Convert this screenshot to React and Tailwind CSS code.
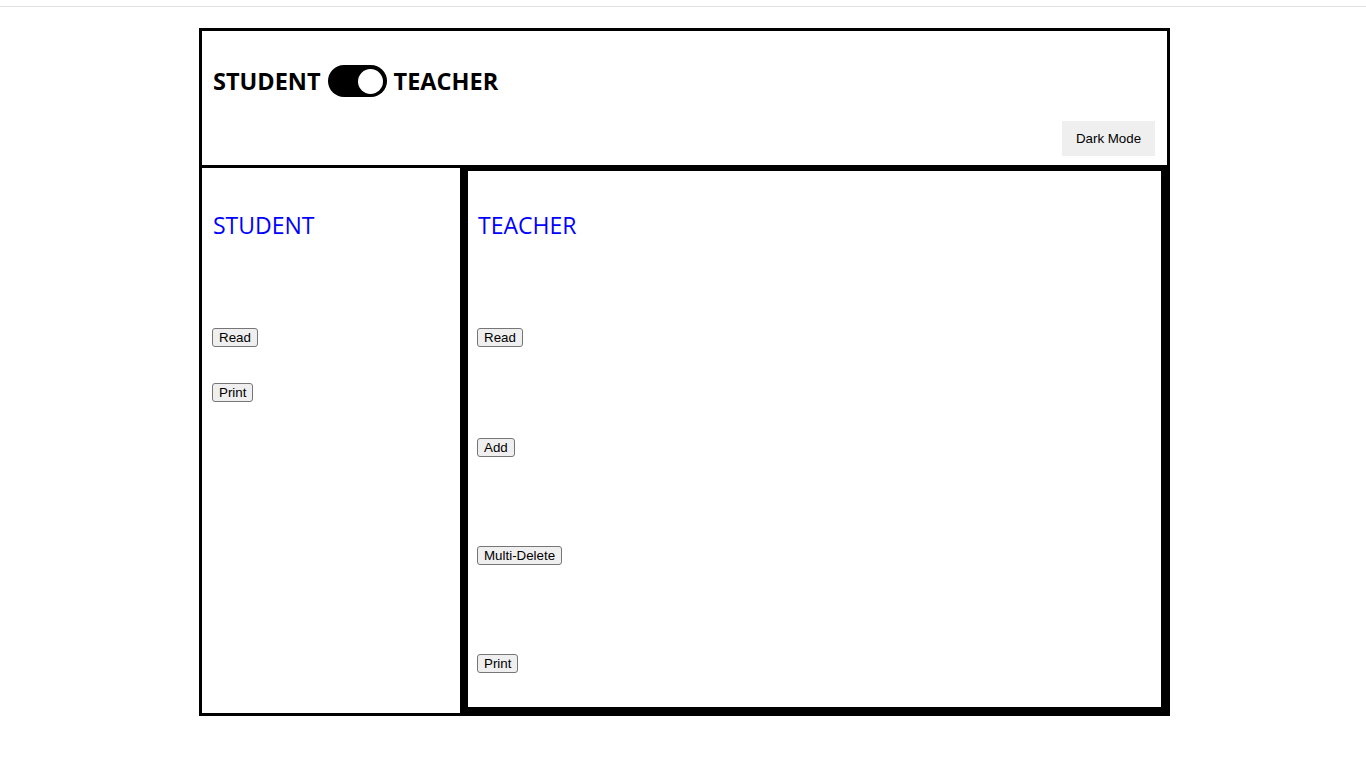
const Btn = ({ children, className = "" }) => (
  <button
    className={`h-[19px] px-[6px] border border-[#767676] rounded-[3px] bg-[#efefef] text-[13.33px] leading-[15px] text-black ${className}`}
    style={{ fontFamily: "'Liberation Sans', Arial, sans-serif" }}
  >
    {children}
  </button>
);

const Toggle = () => (
  <div className="w-[59px] h-[32px] rounded-full bg-black flex items-center justify-end pr-[4px]">
    <div className="w-[25px] h-[25px] rounded-full bg-white" />
  </div>
);

export default function App() {
  return (
    <div className="min-h-screen bg-white" style={{ fontFamily: "'Open Sans', 'Noto Sans', sans-serif" }}>
      <div className="h-[7px] border-b border-[#e2e2e6]" />
      <div className="ml-[199px] mt-[21px] w-[971px] h-[688px] border-[3px] border-black flex flex-col">
        <header className="h-[137px] border-b-[3px] border-black pt-[34px] px-[11px] flex flex-col">
          <div className="h-[32px] flex items-center gap-[7px] text-[23.5px] font-bold text-black">
            <span className="pt-[2px]">STUDENT</span>
            <Toggle />
            <span className="pt-[2px]">TEACHER</span>
          </div>
          <div className="mt-[24px] flex justify-end pr-[1px]">
            <button
              className="w-[93px] h-[35px] bg-[#efefef] text-[13.33px] text-black"
              style={{ fontFamily: "'Liberation Sans', Arial, sans-serif" }}
            >
              Dark Mode
            </button>
          </div>
        </header>
        <div className="flex flex-1">
          <section className="w-[260px] border-r-[2px] border-black pt-[39px] px-[10px] flex flex-col items-start">
            <h2 className="text-[23px] leading-[36px] text-[#0000ff] pl-[1px]">STUDENT</h2>
            <Btn className="mt-[85px]">Read</Btn>
            <Btn className="mt-[36px]">Print</Btn>
          </section>
          <section className="flex-1 border-[6px] border-black -mt-[3px] pt-[36px] px-[9px] flex flex-col items-start">
            <h2 className="text-[23px] leading-[36px] text-[#0000ff] pl-[1px]">TEACHER</h2>
            <Btn className="mt-[85px]">Read</Btn>
            <Btn className="mt-[91px]">Add</Btn>
            <Btn className="mt-[89px]">Multi-Delete</Btn>
            <Btn className="mt-[89px]">Print</Btn>
          </section>
        </div>
      </div>
    </div>
  );
}
